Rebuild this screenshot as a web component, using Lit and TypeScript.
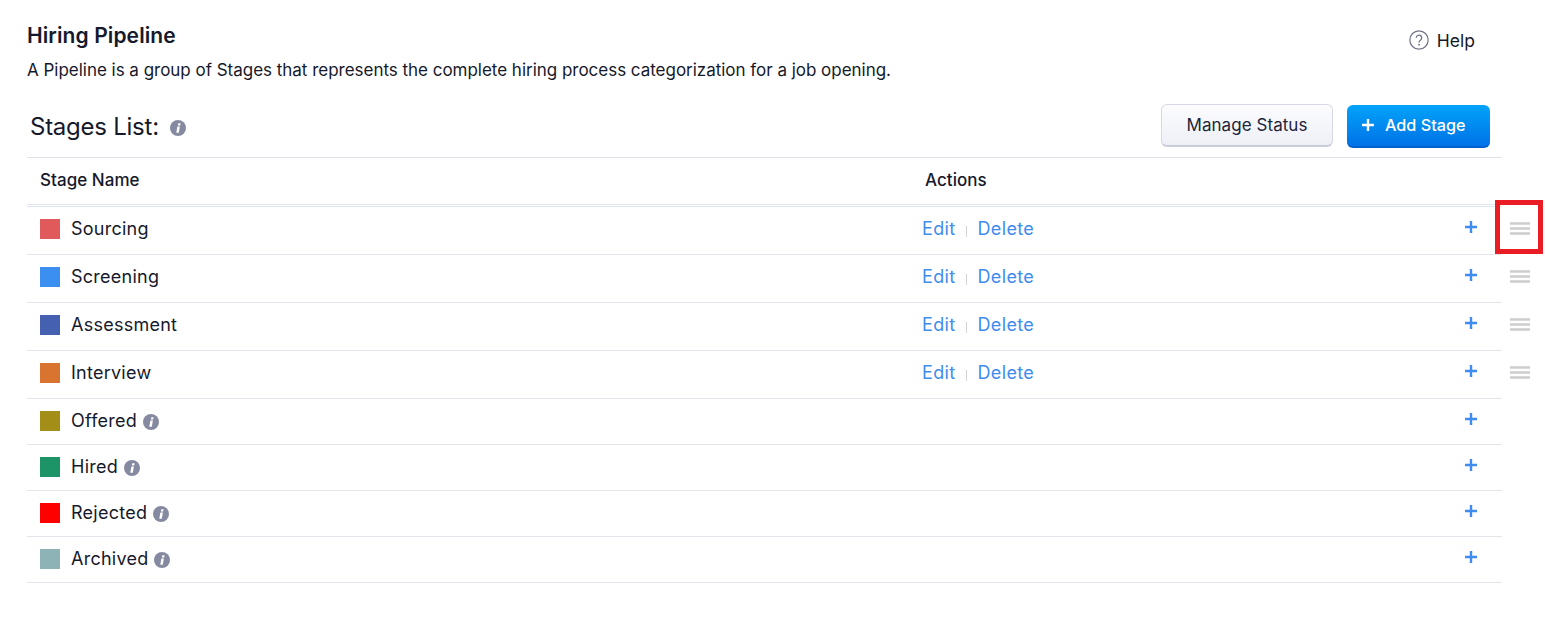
import { LitElement, html, css, svg } from "lit";
import { customElement } from "lit/decorators.js";

const info = svg`<svg class="info" viewBox="0 0 16 16" width="16" height="16"><circle cx="8" cy="8" r="8" fill="#868aa0"/><path d="M8.300 3.300h2.300l-.4 2.100H7.900zM7.400 6.400h2.500l-1.100 6.300H6.300z" fill="#fff"/></svg>`;

const stages = [
  { name: "Sourcing", color: "#e05a5c", edit: true, h: 48 },
  { name: "Screening", color: "#3a8ff0", edit: true, h: 48 },
  { name: "Assessment", color: "#4560b0", edit: true, h: 48 },
  { name: "Interview", color: "#d97430", edit: true, h: 48 },
  { name: "Offered", color: "#a38f17", info: true, h: 46 },
  { name: "Hired", color: "#1c9468", info: true, h: 46 },
  { name: "Rejected", color: "#ff0000", info: true, h: 46 },
  { name: "Archived", color: "#8eb3b6", info: true, h: 46 },
];

@customElement("app-root")
export class AppRoot extends LitElement {
  static styles = css`
    :host { display: block; height: 621px; background: #fff; font-family: Inter, "Noto Sans", sans-serif; color: #15192b; font-size: 18px; overflow: hidden; }
    .page { position: relative; padding: 23px 0 0 27px; width: 1545px; box-sizing: border-box; }
    .top { display: flex; justify-content: space-between; width: 1475px; height: 60px; }
    h1 { margin: 0; font-size: 21px; line-height: 26px; font-weight: 600; letter-spacing: 0.1px; }
    .desc { margin: 9px 0 0; font-size: 17px; line-height: 24px; letter-spacing: -0.02px; }
    .help { display: flex; align-items: center; gap: 8px; height: 24px; margin: 5px 27px 0 0; font-size: 17.500px; }
    .help svg { margin: 0 0 0 -1px; }
    .bar { display: flex; align-items: center; justify-content: space-between; width: 1475px; height: 75px; border-bottom: 1px solid #e1e3ea; box-sizing: border-box; padding: 12px 12px 0 3px; }
    .list-title { display: flex; align-items: center; gap: 11px; font-size: 24px; font-weight: 400; letter-spacing: -0.25px; }
    .buttons { display: flex; gap: 14px; align-items: center; }
    .btn { box-sizing: border-box; display: flex; align-items: center; border-radius: 6px; }
    .manage { width: 172px; height: 43px; margin-bottom: 1px; justify-content: center; font-size: 17px; font-weight: 400; letter-spacing: 0.05px; border: 1px solid #d6d9e4; border-bottom: 2px solid #c8ccdb; background: linear-gradient(#fcfcfe, #eef0f6); color: #20243a; }
    .add { width: 143px; height: 43px; margin-top: 1px; padding: 0 0 1px 15px; font-size: 16.200px; font-weight: 500; background: linear-gradient(#03a3f8, #0072e8); border-bottom: 2px solid #0060cc; color: #fff; gap: 11px; }
    .head { display: flex; width: 1475px; height: 47px; padding-bottom: 2px; align-items: center; font-size: 17px; font-weight: 500; border-bottom: 1px solid #e1e6f0; box-sizing: border-box; letter-spacing: 0.05px; }
    .head .a { width: 898px; padding-left: 13px; box-sizing: border-box; }
    .rule { width: 1475px; height: 1px; margin-top: 1px; background: #dfe6f3; }
    .row { display: flex; align-items: stretch; }
    .cells { display: flex; align-items: center; width: 1475px; flex: none; box-sizing: border-box; border-bottom: 1px solid #e4e5ea; padding: 0 25px 0 13px; font-size: 18px; letter-spacing: 0.25px; }
    .row.tall .cells { padding-bottom: 4px; }
    .row.tall .handle { padding-bottom: 6px; }
    .row:not(.tall) .cells { padding-bottom: 2px; }
    .name { display: flex; align-items: center; width: 882px; flex: none; }
    .sw { width: 20px; height: 20px; margin-right: 11px; flex: none; }
    .info { flex: none; margin: 2px 0 0 6px; }
    .list-title .info { margin: 4px 0 0; }
    .actions { display: flex; align-items: center; color: #3f8cf0; flex: 1; letter-spacing: 0.35px; }
    .sep { width: 1px; height: 11px; background: #d9d3d8; margin: 6px 11px 0 10px; }
    .plus { flex: none; margin-top: -4px; }
    .handle { width: 43px; flex: none; display: flex; align-items: center; padding-left: 8px; box-sizing: border-box; }
    .marker { position: absolute; left: 1495px; top: 200px; width: 48px; height: 54px; box-sizing: border-box; border: 5px solid #ea1c24; }
  `;

  render() {
    return html`<div class="page">
      <div class="top">
        <div>
          <h1>Hiring Pipeline</h1>
          <p class="desc">A Pipeline is a group of Stages that represents the complete hiring process categorization for a job opening.</p>
        </div>
        <div class="help">
          <svg viewBox="0 0 20 20" width="20" height="20"><circle cx="10" cy="10" r="9.200" fill="none" stroke="#6f7285" stroke-width="1.200"/><path d="M7.300 7.800a2.700 2.700 0 1 1 4.300 2.200c-1 .7-1.600 1.200-1.600 2.400" fill="none" stroke="#6f7285" stroke-width="1.300"/><circle cx="10" cy="14.700" r=".9" fill="#6f7285"/></svg>
          Help
        </div>
      </div>
      <div class="bar">
        <div class="list-title">Stages List: ${info}</div>
        <div class="buttons">
          <div class="btn manage">Manage Status</div>
          <div class="btn add">
            <svg viewBox="0 0 12 12" width="12" height="12"><path d="M6 0v12M0 6h12" stroke="#fff" stroke-width="2.400"/></svg>
            Add Stage
          </div>
        </div>
      </div>
      <div class="head"><div class="a">Stage Name</div><div>Actions</div></div>
      <div class="rule"></div>
      ${stages.map(
        (s) => html`<div class="row ${s.edit ? "tall" : ""}" style="height:${s.h}px">
          <div class="cells">
            <div class="name">
              <span class="sw" style="background:${s.color}"></span>${s.name}${s.info ? info : ""}
            </div>
            <div class="actions">
              ${s.edit ? html`Edit<span class="sep"></span>Delete` : ""}
            </div>
            <svg class="plus" viewBox="0 0 12 12" width="12" height="12"><path d="M6 0v12M0 6h12" stroke="#3f8cf0" stroke-width="2.400"/></svg>
          </div>
          ${s.edit
            ? html`<div class="handle"><svg viewBox="0 0 20 13" width="20" height="13"><path d="M0 1.500h20M0 6.500h20M0 11.500h20" stroke="#cdcdcd" stroke-width="2.600"/></svg></div>`
            : ""}
        </div>`
      )}
      <div class="marker"></div>
    </div>`;
  }
}
